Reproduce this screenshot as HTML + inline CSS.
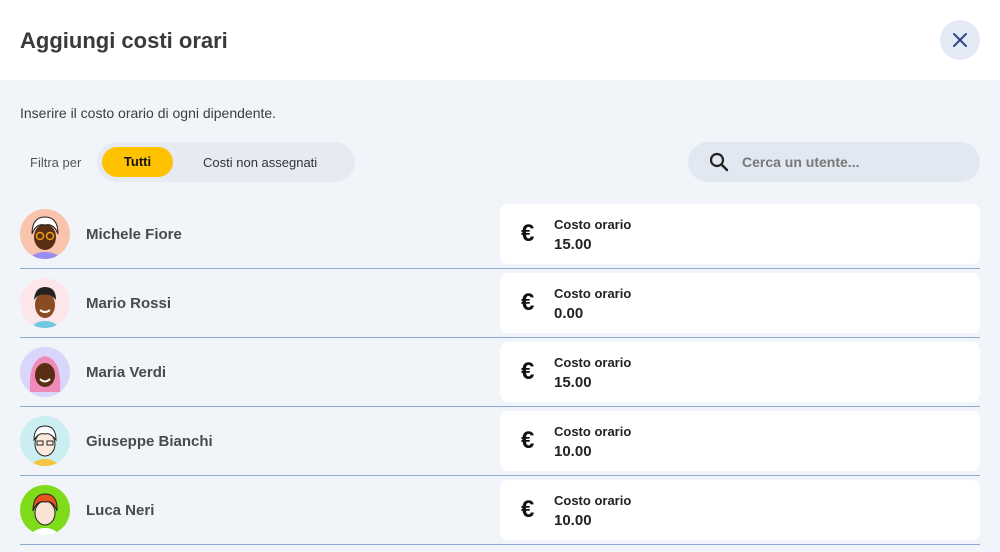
<!DOCTYPE html>
<html><head><style>
*{box-sizing:border-box;margin:0;padding:0}
body{width:1000px;height:552px;overflow:hidden;background:#f1f5fa;font-family:"Liberation Sans",sans-serif;color:#3d3d3d;position:relative}
.hdr{position:absolute;left:0;top:0;width:1000px;height:80px;background:#fff}
.hdr h1{position:absolute;left:20px;top:28px;font-size:22px;font-weight:bold;color:#3a3a3a}
.close{position:absolute;left:940px;top:20px;width:40px;height:40px;border-radius:50%;background:#e4eaf3}
.desc{position:absolute;left:20px;top:105px;font-size:14px;color:#3d3d3d}
.flt{position:absolute;left:30px;top:155px;font-size:13px;color:#555}
.pill{position:absolute;left:97px;top:142px;width:258px;height:40px;border-radius:20px;background:#e6ebf3}
.tutti{position:absolute;left:102px;top:147px;width:71px;height:30px;border-radius:15px;background:#ffc200;font-size:13px;font-weight:bold;color:#111;text-align:center;line-height:30px}
.cna{position:absolute;left:203px;top:155px;font-size:13px;color:#333}
.search{position:absolute;left:688px;top:142px;width:292px;height:40px;border-radius:20px;background:#e2e8f1}
.search span{position:absolute;left:54px;top:12px;font-size:14px;font-weight:bold;color:#777}
.row{position:absolute;left:0;width:1000px;height:69px}
.av{position:absolute;left:20px;top:5px;width:50px;height:50px;border-radius:50%;overflow:hidden}
.nm{position:absolute;left:86px;top:22px;font-size:15px;font-weight:bold;color:#4a4a4a}
.card{position:absolute;left:500px;top:0;width:480px;height:60px;background:#fff;border-radius:8px}
.eur{position:absolute;left:21px;top:16px;font-size:24px;font-weight:bold;color:#111}
.lb{position:absolute;left:54px;top:13px;font-size:13px;font-weight:bold;color:#222}
.vl{position:absolute;left:54px;top:32px;font-size:15px;font-weight:bold;color:#222}
.sep{position:absolute;left:20px;top:64px;width:960px;height:1px;background:#8fa8d6}
</style></head><body>
<div class="hdr"><h1>Aggiungi costi orari</h1>
<div class="close"><svg width="40" height="40"><path d="M14 14L26 26M26 14L14 26" stroke="#2c4a8a" stroke-width="2" stroke-linecap="round"/></svg></div></div>
<div class="desc">Inserire il costo orario di ogni dipendente.</div>
<div class="flt">Filtra per</div>
<div class="pill"></div><div class="tutti">Tutti</div><div class="cna">Costi non assegnati</div>
<div class="search"><svg style="position:absolute;left:21px;top:10px" width="20" height="20"><circle cx="8" cy="8" r="6" fill="none" stroke="#222" stroke-width="2.2"/><path d="M12.5 12.5L18 18" stroke="#222" stroke-width="2.4" stroke-linecap="round"/></svg><span>Cerca un utente...</span></div>

<div class="row" style="top:204px"><div class="av" style="background:#f8c4ae"><svg width="50" height="50"><ellipse cx="25" cy="52" rx="16" ry="9" fill="#9b8cf0"/><ellipse cx="25" cy="28" rx="11" ry="13" fill="#5a2e12"/><path d="M12 25Q12 8 25 8Q38 8 38 25Q34 14 25 16Q16 14 12 25Z" fill="#fff" stroke="#222"/><circle cx="20" cy="27" r="3.5" fill="none" stroke="#e8a020" stroke-width="1.5"/><circle cx="30" cy="27" r="3.5" fill="none" stroke="#e8a020" stroke-width="1.5"/></svg></div><div class="nm">Michele Fiore</div>
<div class="card"><div class="eur">€</div><div class="lb">Costo orario</div><div class="vl">15.00</div></div><div class="sep"></div></div>

<div class="row" style="top:273px"><div class="av" style="background:#fde6ea"><svg width="50" height="50"><ellipse cx="25" cy="52" rx="14" ry="9" fill="#6fc9e0"/><ellipse cx="25" cy="27" rx="10" ry="13" fill="#8a4a22"/><path d="M14 22Q15 9 25 9Q36 9 36 22Q30 15 25 17Q19 15 14 22Z" fill="#222"/><path d="M20 32Q25 36 30 32" stroke="#fff" stroke-width="2" fill="none"/></svg></div><div class="nm">Mario Rossi</div>
<div class="card"><div class="eur">€</div><div class="lb">Costo orario</div><div class="vl">0.00</div></div><div class="sep"></div></div>

<div class="row" style="top:342px"><div class="av" style="background:#d9d5fb"><svg width="50" height="50"><path d="M10 45Q8 12 25 9Q42 12 40 45Z" fill="#f08ab8"/><ellipse cx="25" cy="28" rx="10" ry="12" fill="#5a2e12"/><path d="M20 32Q25 37 30 32" stroke="#fff" stroke-width="2" fill="none"/></svg></div><div class="nm">Maria Verdi</div>
<div class="card"><div class="eur">€</div><div class="lb">Costo orario</div><div class="vl">15.00</div></div><div class="sep"></div></div>

<div class="row" style="top:411px"><div class="av" style="background:#cbeef0"><svg width="50" height="50"><ellipse cx="25" cy="52" rx="14" ry="9" fill="#f5c542"/><ellipse cx="25" cy="28" rx="10" ry="12" fill="#fbe9dd" stroke="#222"/><path d="M14 24Q14 10 25 10Q36 10 36 24Q30 16 25 18Q19 16 14 24Z" fill="#fff" stroke="#222"/><rect x="17" y="25" width="6" height="4" fill="none" stroke="#222"/><rect x="27" y="25" width="6" height="4" fill="none" stroke="#222"/></svg></div><div class="nm">Giuseppe Bianchi</div>
<div class="card"><div class="eur">€</div><div class="lb">Costo orario</div><div class="vl">10.00</div></div><div class="sep"></div></div>

<div class="row" style="top:480px"><div class="av" style="background:#7fdc1a"><svg width="50" height="50"><ellipse cx="25" cy="52" rx="14" ry="9" fill="#fff"/><ellipse cx="25" cy="28" rx="10" ry="12" fill="#fbe3d3" stroke="#222"/><path d="M13 26Q13 9 25 9Q38 9 37 26Q33 15 25 17Q17 15 13 26Z" fill="#e8541e" stroke="#222"/></svg></div><div class="nm">Luca Neri</div>
<div class="card"><div class="eur">€</div><div class="lb">Costo orario</div><div class="vl">10.00</div></div><div class="sep"></div></div>
</body></html>
